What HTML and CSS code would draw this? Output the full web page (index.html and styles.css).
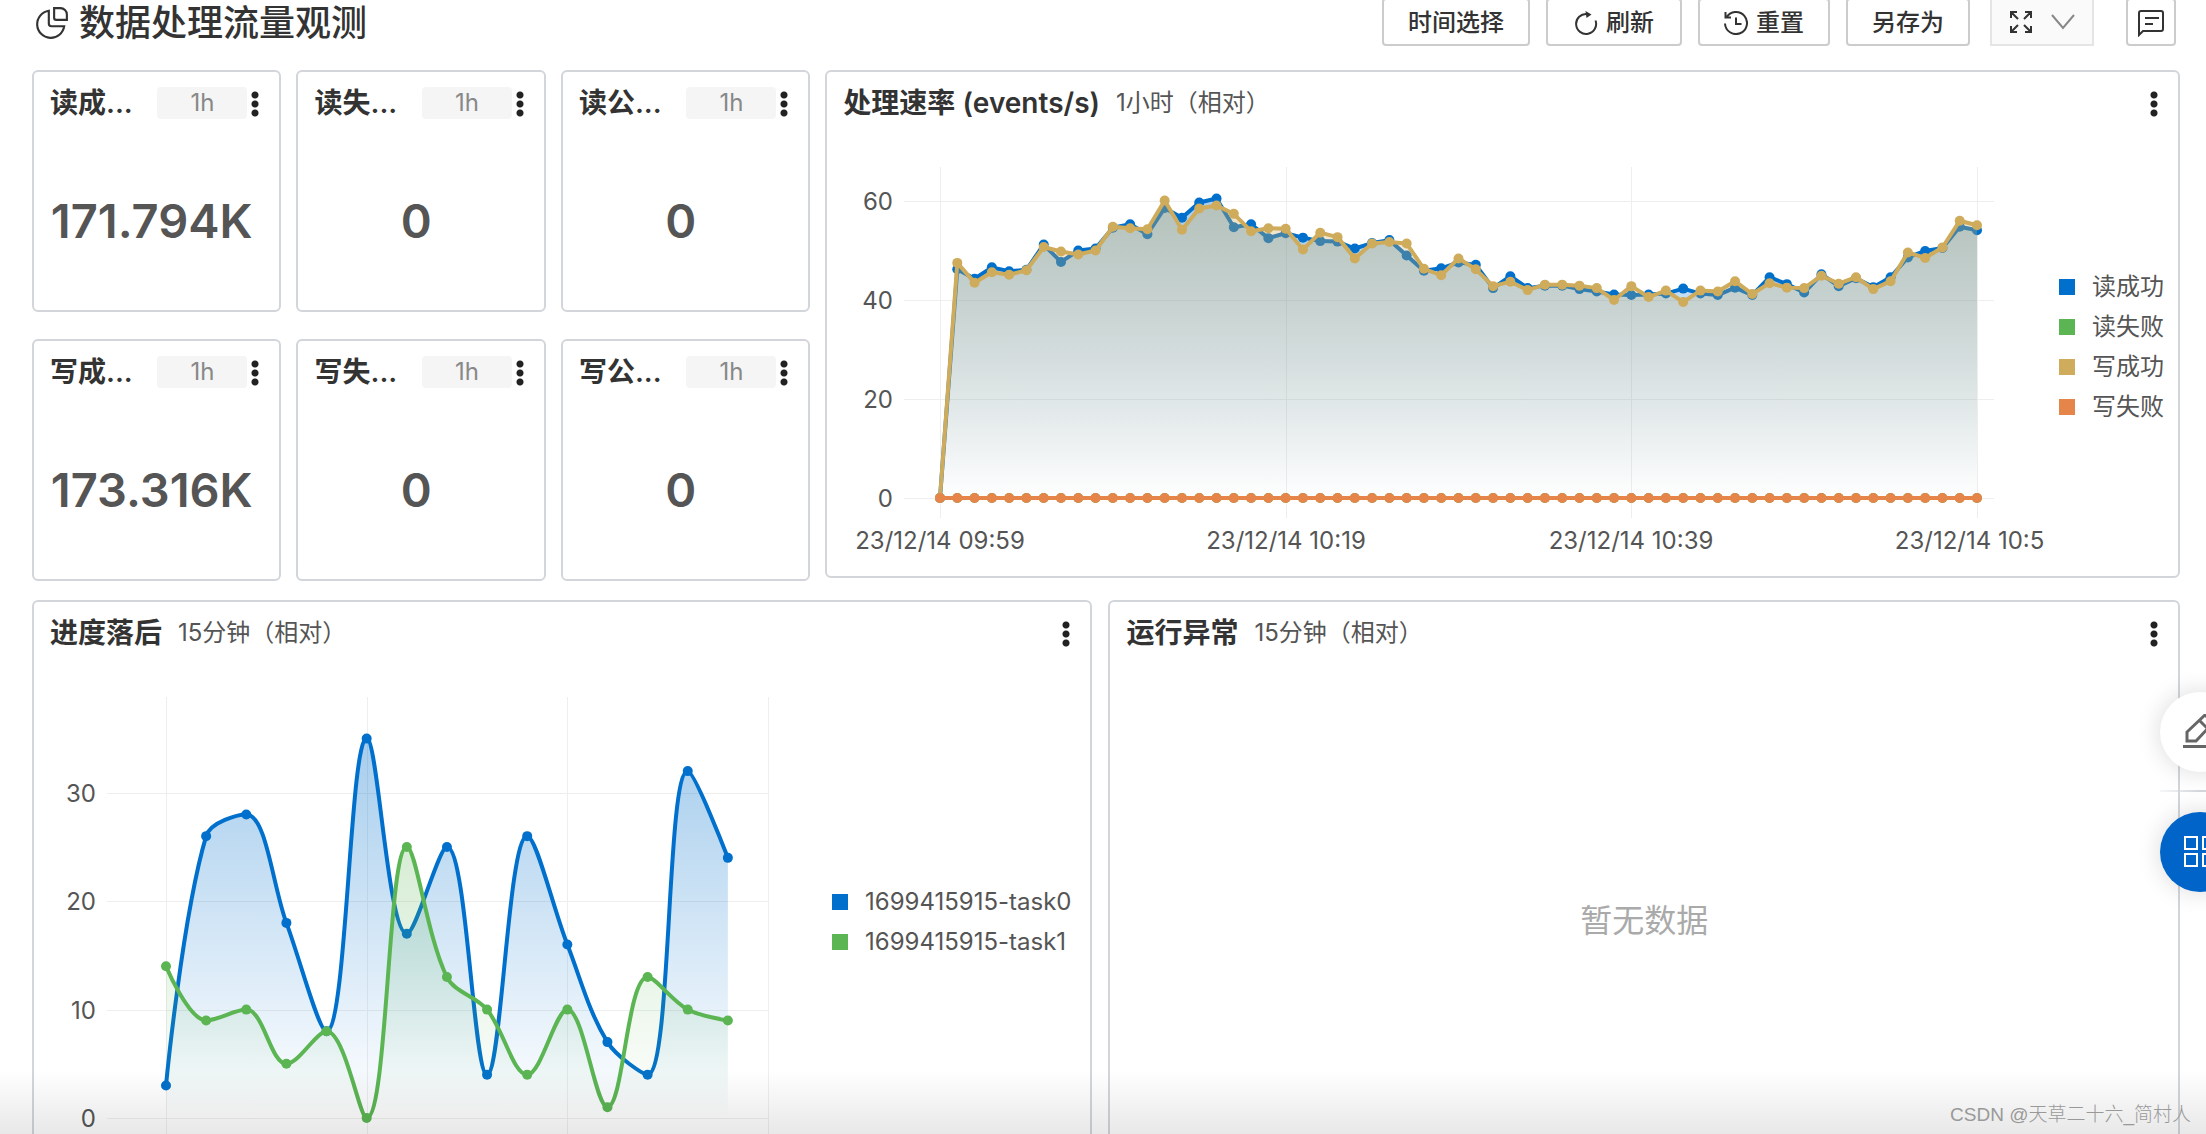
FILE: index.html
```html
<!DOCTYPE html>
<html lang="zh-CN">
<head>
<meta charset="utf-8">
<meta name="viewport" content="width=device-width, initial-scale=1">
<title>数据处理流量观测</title>
<link rel="stylesheet" href="styles.css">
</head>
<body>
<div class="page">
  <header class="topbar">
    <h1 class="topbar-title">
      <svg class="title-icon" viewBox="0 0 32 32" aria-hidden="true"><path d="M13 4.500A12.800 12.800 0 1 0 27.500 19H15.500a2.500 2.500 0 0 1-2.500-2.500z"/><path d="M18 2h6a6 6 0 0 1 6 6v5H20a2 2 0 0 1-2-2z"/></svg>
      数据处理流量观测
    </h1>
    <div class="toolbar">
      <button class="btn btn-time" type="button">时间选择</button>
      <button class="btn btn-refresh" type="button"><svg class="btn-icon" viewBox="0 0 24 24" aria-hidden="true"><path d="M13 3A10 10 0 1 0 21.500 9.500"/><path class="solid" d="M11.500 0l6 3.500-5 3.500z"/></svg>刷新</button>
      <button class="btn btn-reset" type="button"><svg class="btn-icon" viewBox="0 0 24 24" aria-hidden="true"><path d="M2.500 6.500A11 11 0 1 1 1 12.500M1.500 1v5.500h5.500M12 6.500V13h5.500"/></svg>重置</button>
      <button class="btn btn-save" type="button">另存为</button>
      <button class="btn btn-expand" type="button" aria-label="全屏"><svg class="btn-icon" viewBox="0 0 24 24" aria-hidden="true"><path d="M2 8V2h6M2 2l7 7M16 2h6v6M22 2l-7 7M2 16v6h6M2 22l7-7M16 22h6v-6M22 22l-7-7"/></svg><svg class="chevron" viewBox="0 0 24 16" aria-hidden="true"><path d="M1 1l11 13L23 1"/></svg></button>
      <button class="btn btn-note" type="button" aria-label="备注"><svg class="btn-icon note-icon" viewBox="0 0 28 28" aria-hidden="true"><path d="M2 26V4a2 2 0 0 1 2-2h20a2 2 0 0 1 2 2v16a2 2 0 0 1-2 2H6zM8 9h14M8 15h8"/></svg></button>
    </div>
  </header>

  <main class="board">
    <div class="row row-top">
      <div class="stats">
        <section class="card stat"><div class="card-head"><h2 class="card-title">读成...</h2><span class="chip">1h</span><button class="more" type="button" aria-label="更多"></button></div><p class="stat-value">171.794K</p></section>
        <section class="card stat"><div class="card-head"><h2 class="card-title">读失...</h2><span class="chip">1h</span><button class="more" type="button" aria-label="更多"></button></div><p class="stat-value">0</p></section>
        <section class="card stat"><div class="card-head"><h2 class="card-title">读公...</h2><span class="chip">1h</span><button class="more" type="button" aria-label="更多"></button></div><p class="stat-value">0</p></section>
        <section class="card stat"><div class="card-head"><h2 class="card-title">写成...</h2><span class="chip">1h</span><button class="more" type="button" aria-label="更多"></button></div><p class="stat-value">173.316K</p></section>
        <section class="card stat"><div class="card-head"><h2 class="card-title">写失...</h2><span class="chip">1h</span><button class="more" type="button" aria-label="更多"></button></div><p class="stat-value">0</p></section>
        <section class="card stat"><div class="card-head"><h2 class="card-title">写公...</h2><span class="chip">1h</span><button class="more" type="button" aria-label="更多"></button></div><p class="stat-value">0</p></section>
      </div>
      <section class="card panel panel-rate">
        <div class="card-head"><h2 class="card-title">处理速率 (events/s)</h2><span class="range">1小时（相对）</span><button class="more" type="button" aria-label="更多"></button></div>
        <div class="panel-body">
          <div class="chart" id="rate-chart"></div>
          <ul class="legend">
            <li class="legend-item"><span class="swatch blue"></span>读成功</li>
            <li class="legend-item"><span class="swatch green"></span>读失败</li>
            <li class="legend-item"><span class="swatch tan"></span>写成功</li>
            <li class="legend-item"><span class="swatch orange"></span>写失败</li>
          </ul>
        </div>
      </section>
    </div>
    <div class="row row-bottom">
      <section class="card panel panel-lag">
        <div class="card-head"><h2 class="card-title">进度落后</h2><span class="range">15分钟（相对）</span><button class="more" type="button" aria-label="更多"></button></div>
        <div class="panel-body">
          <div class="chart" id="lag-chart"></div>
          <ul class="legend">
            <li class="legend-item"><span class="swatch blue"></span>1699415915-task0</li>
            <li class="legend-item"><span class="swatch green"></span>1699415915-task1</li>
          </ul>
        </div>
      </section>
      <section class="card panel">
        <div class="card-head"><h2 class="card-title">运行异常</h2><span class="range">15分钟（相对）</span><button class="more" type="button" aria-label="更多"></button></div>
        <p class="empty">暂无数据</p>
      </section>
    </div>
  </main>

  <div class="fade"></div>
  <aside class="floaters">
    <button class="float float-edit" type="button" aria-label="编辑"><svg class="float-icon" viewBox="0 0 36 36" aria-hidden="true"><path d="M5 18L23 1l8 8-17 18H5zM18 7l8 8"/><path d="M1 32.500h34"/></svg></button>
    <span class="float-line"></span>
    <button class="float float-apps" type="button" aria-label="应用"><svg class="float-icon apps-icon" viewBox="0 0 32 32" aria-hidden="true"><path d="M1 1h12v12H1zM19 1h12v12H19zM1 18h12v12H1zM19 18h12v12H19z"/></svg></button>
  </aside>
  <span class="watermark">CSDN @天草二十六_简村人</span>
</div>
<script src="charts.js"></script>
</body>
</html>
```
FILE: styles.css
```css
* { box-sizing: border-box; }

body {
  margin: 0;
  background: #fff;
  color: #333;
  font-family: Inter, "Noto Sans CJK SC", sans-serif;
  font-size: 24px;
  line-height: 32px;
}

h1, h2, p, ul { margin: 0; padding: 0; }
button { font: inherit; color: inherit; padding: 0; }
svg { flex: none; fill: none; stroke: currentColor; }

.page {
  position: relative;
  height: 100vh;
  overflow: hidden;
}

/* top bar */
.topbar {
  display: flex;
  align-items: flex-end;
  justify-content: space-between;
  height: 46px;
  padding: 0 30px 0 35px;
}
.topbar-title {
  display: flex;
  align-items: center;
  gap: 10px;
  height: 46px;
  font-size: 36px;
  font-weight: 500;
}
.title-icon { width: 34px; height: 34px; stroke-width: 2; }

.toolbar { display: flex; gap: 16px; }
.btn {
  display: flex;
  align-items: center;
  justify-content: center;
  gap: 8px;
  height: 48px;
  padding-top: 2px;
  border: 2px solid #ccc;
  border-radius: 4px;
  background: #fff;
  font-weight: 500;
}
.btn-icon { width: 24px; height: 24px; stroke-width: 2; }
.solid { fill: currentColor; stroke: none; }
.btn-time { width: 148px; }
.btn-refresh { width: 136px; }
.btn-reset { width: 132px; }
.btn-save { width: 124px; }
.btn-expand {
  width: 104px;
  margin-left: 4px;
  gap: 18px;
  padding-top: 0;
  border-color: #e5e5e5;
  border-radius: 0;
  background: #fafafa;
}
.chevron { width: 24px; height: 16px; stroke: #888; stroke-width: 2; }
.btn-note { width: 50px; margin-left: 16px; }
.note-icon { width: 28px; height: 28px; }

/* board */
.board {
  display: flex;
  flex-direction: column;
  gap: 19px;
  padding: 24px 26px 0 32px;
}
.row { display: grid; align-items: start; }
.row-top { grid-template-columns: 778fr 1354fr; gap: 15px; }
.row-bottom { grid-template-columns: 1060fr 1071fr; gap: 16px; }
.stats {
  display: grid;
  grid-template-columns: repeat(3, 1fr);
  gap: 27px 15px;
}

.card {
  min-width: 0;
  border: 2px solid #d2d6db;
  border-radius: 6px;
  background: #fff;
}
.card-head {
  display: flex;
  align-items: center;
  height: 62px;
  padding: 0 16px;
}
.card-title {
  font-size: 28px;
  font-weight: 600;
  white-space: nowrap;
}
.range { margin-left: 16px; color: #555; }
.more {
  width: 16px;
  height: 27px;
  margin-left: auto;
  border: 0;
  background: radial-gradient(circle at 8px 5px, #222 3px, transparent 4px) 0 0 / 16px 9px repeat-y;
}

.stat { height: 242px; }
.stat .card-title { flex: 1; }
.chip {
  width: 90px;
  border-radius: 4px;
  background: #f5f5f5;
  color: #888;
  text-align: center;
}
.stat .more { margin-left: 0; }
.stat-value {
  padding: 59px 10px 0 0;
  color: #555;
  font-size: 47px;
  font-weight: 600;
  line-height: 56px;
  text-align: center;
}

.panel {
  display: flex;
  flex-direction: column;
}
.panel-rate { height: 508px; }
.row-bottom .panel { height: 640px; }
.panel-body {
  display: flex;
  flex: 1;
  min-height: 0;
}
.chart { flex: 1; min-width: 0; overflow: hidden; }
.chart-svg { display: block; }
.legend {
  display: flex;
  flex-direction: column;
  gap: 8px;
  padding: 137px 14px 0 15px;
  color: #555;
  list-style: none;
}
.panel-lag .legend { padding: 222px 19px 0 20px; }
.legend-item {
  display: flex;
  align-items: center;
  gap: 17px;
}
.swatch { width: 16px; height: 16px; }
.blue { background: #0070cc; }
.green { background: #5bb553; }
.tan { background: #cfab5c; }
.orange { background: #e68549; }

.grid-line { stroke: #eee; stroke-width: 1; shape-rendering: crispEdges; }
.axis-text { fill: #555; stroke: none; font-size: 24px; }
.series-line { stroke-width: 4; stroke-linejoin: round; }
.series-area, .series-dot { stroke: none; }

.empty {
  margin: auto;
  padding-bottom: 60px;
  color: #aaa;
  font-size: 32px;
}

/* overlays */
.fade {
  position: absolute;
  right: 0;
  bottom: 0;
  left: 0;
  height: 64px;
  background: linear-gradient(rgba(0, 0, 0, 0), rgba(0, 0, 0, 0.09));
  pointer-events: none;
}
.floaters {
  position: absolute;
  top: 692px;
  right: -34px;
  display: flex;
  flex-direction: column;
  width: 80px;
}
.float {
  display: flex;
  align-items: center;
  justify-content: center;
  width: 80px;
  height: 80px;
  border: 0;
  border-radius: 50%;
  background: #fff;
  color: #666;
  box-shadow: 0 0 24px rgba(0, 0, 0, 0.15);
}
.float-line {
  height: 2px;
  margin: 18px 0 20px;
  background: linear-gradient(to right, rgba(210, 214, 219, 0.2), #d2d6db 50%);
}
.float-apps { background: #0064c8; color: #fff; }
.float-icon { width: 36px; height: 36px; stroke-width: 3; }
.apps-icon { width: 32px; height: 32px; stroke-width: 2; }
.watermark {
  position: absolute;
  right: 15px;
  bottom: 3px;
  color: #999;
  font-family: "Liberation Sans", "Noto Sans CJK SC", sans-serif;
  font-size: 19px;
  font-weight: 300;
}
```
FILE: charts.js
```js
const NS = 'http://www.w3.org/2000/svg';

function el(parent, name, attrs, text) {
  const node = document.createElementNS(NS, name);
  for (const key in attrs) node.setAttribute(key, attrs[key]);
  if (text !== undefined) node.textContent = text;
  parent.appendChild(node);
  return node;
}

const clamp = (v, a, b) => Math.max(Math.min(v, Math.max(a, b)), Math.min(a, b));

function straight(pts) {
  return 'M' + pts.map(p => p.join(' ')).join('L');
}

// Bezier line whose control points stay inside each segment's box.
function smooth(pts) {
  const k = 0.35;
  let d = 'M' + pts[0].join(' ');
  let c0 = pts[0];
  for (let i = 1; i < pts.length; i++) {
    const [x, y] = pts[i];
    const prev = pts[i - 1];
    const next = pts[i + 1];
    let c1 = [x, y];
    let c2 = [x, y];
    if (next) {
      const lp = Math.hypot(x - prev[0], y - prev[1]);
      const ln = Math.hypot(next[0] - x, next[1] - y);
      const r = ln / (ln + lp);
      c2 = [0, 1].map(a => clamp(pts[i][a] + (next[a] - prev[a]) * k * r, pts[i][a], next[a]));
      c1 = [0, 1].map(a => clamp(pts[i][a] - (c2[a] - pts[i][a]) * lp / ln, prev[a], pts[i][a]));
      c2 = [0, 1].map(a => pts[i][a] + (pts[i][a] - c1[a]) * ln / lp);
    }
    d += 'C' + [...c0, ...c1, x, y].join(' ');
    c0 = c2;
  }
  return d;
}

function draw(id, o) {
  const host = document.getElementById(id);
  host.textContent = '';
  const w = host.clientWidth;
  const h = host.clientHeight;
  const svg = el(host, 'svg', { class: 'chart-svg', width: w, height: h });
  const defs = el(svg, 'defs', {});
  const x1 = w - o.right;
  const px = i => o.left + (x1 - o.left) * i / o.span;
  const py = v => o.zero - v * o.unit;

  o.yTicks.forEach(v => {
    const y = Math.round(py(v));
    el(svg, 'line', { class: 'grid-line', x1: o.gridLeft, x2: x1 + o.gridOver, y1: y, y2: y });
    el(svg, 'text', { class: 'axis-text', x: o.gridLeft - 11, y: y + 9, 'text-anchor': 'end' }, v);
  });
  o.xTicks.forEach(([i, label]) => {
    const x = Math.round(px(i));
    el(svg, 'line', { class: 'grid-line', x1: x, x2: x, y1: o.top, y2: o.zero + 20 });
    if (label) el(svg, 'text', { class: 'axis-text', x, y: o.zero + 51, 'text-anchor': 'middle' }, label);
  });

  o.series.forEach((s, n) => {
    const pts = s.data.map((v, i) => [px(i), py(v)]);
    const d = s.smooth ? smooth(pts) : straight(pts);
    const gid = id + '-fill-' + n;
    const grad = el(defs, 'linearGradient', { id: gid, x1: 0, y1: 0, x2: 0, y2: 1 });
    el(grad, 'stop', { offset: '0', 'stop-color': s.color, 'stop-opacity': s.alpha });
    el(grad, 'stop', { offset: '1', 'stop-color': s.color, 'stop-opacity': 0 });
    const last = pts[pts.length - 1][0];
    if (s.alpha) el(svg, 'path', { class: 'series-area', fill: `url(#${gid})`, d: `${d}L${last} ${o.zero}L${pts[0][0]} ${o.zero}Z` });
    el(svg, 'path', { class: 'series-line', stroke: s.color, d });
    pts.forEach(p => el(svg, 'circle', { class: 'series-dot', fill: s.color, cx: p[0], cy: p[1], r: 5 }));
  });
}

const readOk = [0, 46.2, 44.3, 46.6, 45.8, 46.1, 51.2, 47.7, 50, 50.4, 54.6, 55.3, 53.3, 58.6, 56.6, 59.7, 60.5, 54.7, 55.3, 52.5, 53.5, 52.6, 51.9, 51.8, 50.4, 51.5, 52.1, 49, 45.9, 46.4, 47.6, 47.1, 42.4, 44.8, 42.4, 42.9, 42.9, 42.2, 41.7, 41.1, 41, 41.1, 41.3, 42.3, 41.3, 41, 42.5, 41, 44.6, 43.2, 41.5, 45.2, 42.8, 44.4, 42.6, 44.6, 48.6, 49.9, 50.5, 54.8, 54.1];
const writeOk = [0, 47.5, 43.5, 45.6, 45.1, 46, 50.7, 49.8, 49.2, 50, 54.8, 54.5, 54.3, 60.1, 54.2, 58.5, 59.1, 57.4, 53.9, 54.5, 54.4, 50.2, 53.6, 52.7, 48.4, 51.4, 51.7, 51.4, 46.3, 45, 48.4, 46.2, 42.8, 43.7, 42, 43.1, 43.1, 42.9, 42.4, 40, 42.8, 40.6, 41.9, 39.6, 41.9, 41.7, 43.8, 41.2, 43.4, 42.5, 42.4, 44.9, 43.3, 44.6, 42.2, 43.8, 49.6, 48.5, 50.6, 56, 55.1];
const none = new Array(61).fill(0);

function render() {
  draw('rate-chart', {
    left: 113, right: 67, gridLeft: 77, gridOver: 17, top: 33, zero: 364, unit: 4.95, span: 60,
    yTicks: [0, 20, 40, 60],
    xTicks: [[0, '23/12/14 09:59'], [20, '23/12/14 10:19'], [40, '23/12/14 10:39'], [60, '23/12/14 10:59']],
    series: [
      { color: '#0070cc', alpha: 0.35, data: readOk },
      { color: '#5bb553', alpha: 0, data: none },
      { color: '#cfab5c', alpha: 0.35, data: writeOk },
      { color: '#e68549', alpha: 0, data: none }
    ]
  });
  draw('lag-chart', {
    left: 132, right: 44, gridLeft: 73, gridOver: 0, top: 33, zero: 454, unit: 10.84, span: 15,
    yTicks: [0, 10, 20, 30],
    xTicks: [[0], [5], [10], [15]],
    series: [
      { color: '#0070cc', alpha: 0.35, smooth: true, data: [3, 26, 28, 18, 8, 35, 17, 25, 4, 26, 16, 7, 4, 32, 24] },
      { color: '#5bb553', alpha: 0.25, smooth: true, data: [14, 9, 10, 5, 8, 0, 25, 13, 10, 4, 10, 1, 13, 10, 9] }
    ]
  });
}

render();
window.addEventListener('resize', render);
```
